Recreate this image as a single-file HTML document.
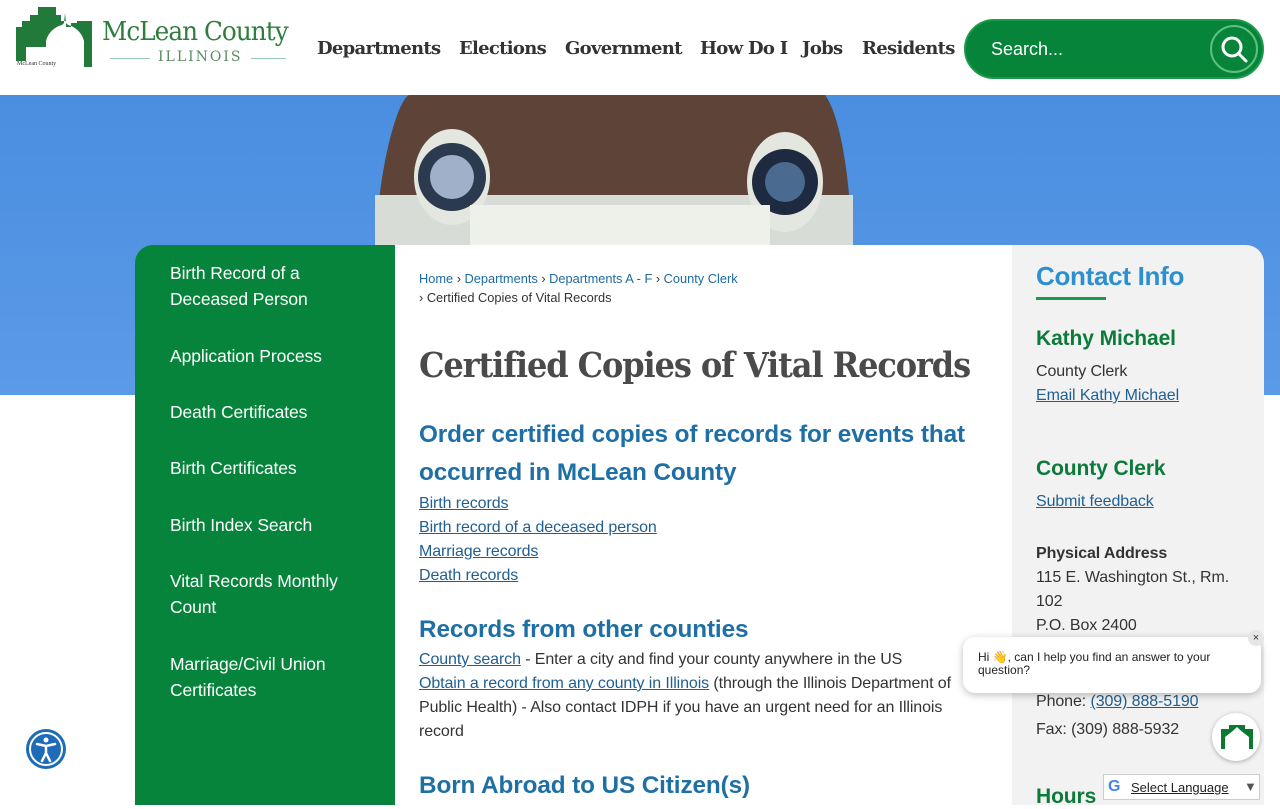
<!DOCTYPE html>
<html><head><meta charset="utf-8"><style>
*{margin:0;padding:0;box-sizing:border-box}
body{width:1280px;height:800px;overflow:hidden;position:relative;font-family:"Liberation Sans",sans-serif;background:#fff;color:#333}
.hdr{position:absolute;top:0;left:0;width:1280px;height:95px;background:#fff}
.nav{position:absolute;top:38px;font-family:"DejaVu Serif",serif;font-weight:bold;font-size:18px;color:#333;letter-spacing:-0.7px}
.search{position:absolute;left:964px;top:19px;width:300px;height:60px;border-radius:30px;background:#06843a;border:2px solid #1a9a4a}
.search span{position:absolute;left:25px;top:18px;color:#fff;font-size:18px}
.sbtn{position:absolute;right:4px;top:4px;width:48px;height:48px;border-radius:50%;border:2px solid #5cc07f}
.hero{position:absolute;top:95px;left:0;width:1280px;height:300px;background:linear-gradient(180deg,#4a8ee0,#5b9ae6)}
.side{position:absolute;left:135px;top:245px;width:260px;height:560px;background:#07843b;border-top-left-radius:18px}
.side div{position:absolute;left:35px;color:#fff;font-size:17.5px;line-height:26px;letter-spacing:-0.1px}
.main{position:absolute;left:395px;top:245px;width:617px;height:560px;background:#fff}
.right{position:absolute;left:1012px;top:245px;width:252px;height:560px;background:#f2f2f2;border-top-right-radius:18px}
a{color:#1f5f91;text-decoration:underline}
.bc{position:absolute;left:24px;font-size:12.8px;color:#333}
.bc a{text-decoration:none;color:#1f6aa0}
h1{position:absolute;left:24px;top:100px;font-family:"DejaVu Serif",serif;font-weight:bold;font-size:35px;color:#4a4a4a;letter-spacing:-1.2px;white-space:nowrap;transform:scaleX(0.915);transform-origin:0 0}
h2{position:absolute;left:24px;font-size:24.3px;color:#1d6fa5;font-weight:bold;line-height:38px;letter-spacing:-0.1px}
.p{position:absolute;left:24px;font-size:16px;line-height:24px;color:#333;width:560px;letter-spacing:-0.1px}
.r{position:absolute;left:24px;font-size:16px;line-height:24px;color:#333;letter-spacing:-0.1px}
.g{color:#0b7a3a;font-weight:bold;font-size:21px}
</style></head><body>
<div class="hdr">
<svg style="position:absolute;left:16px;top:7px" width="76" height="60" viewBox="0 0 76 60"><path d="M0 20h6v-6h8v-6h8V0h18v8h5v6h5v6h5v-4h6v-2h15v46h-8V34c-2-8-8-14-16-16l-2-2-1-10-1 10-2 2c-8 2-14 8-16 16v6H10v14H0z" fill="#217a3a"/><text x="1" y="58" font-size="6" font-family="Liberation Serif" fill="#333">McLean County</text></svg>
<div style="position:absolute;left:102px;top:17px;font-family:'DejaVu Serif',serif;font-size:26px;color:#2e7d3e;letter-spacing:-1px;transform:scaleX(0.95);transform-origin:0 0">McLean County</div>
<div style="position:absolute;left:110px;top:58px;width:176px;height:1px;background:#9cb"></div>
<div style="position:absolute;left:150px;top:49px;background:#fff;padding:0 8px;font-family:'DejaVu Serif',serif;font-size:14px;color:#5a8a66;letter-spacing:2px">ILLINOIS</div>
<div class="nav" style="left:317px">Departments</div>
<div class="nav" style="left:459px">Elections</div>
<div class="nav" style="left:565px">Government</div>
<div class="nav" style="left:700px">How Do I</div>
<div class="nav" style="left:802px">Jobs</div>
<div class="nav" style="left:862px">Residents</div>
<div class="search"><span>Search...</span><div class="sbtn"><svg width="44" height="44" viewBox="0 0 44 44"><circle cx="20" cy="20" r="9" stroke="#fff" stroke-width="3" fill="none"/><path d="M27 27l7 7" stroke="#fff" stroke-width="3" stroke-linecap="round"/></svg></div></div>
</div>
<div class="hero">
<svg width="1280" height="300"><path d="M375 150 C380 60 400 0 410 0 L825 0 C840 20 850 80 852 150 Z" fill="#5e4438"/><rect x="375" y="100" width="478" height="200" fill="#d8dcd6"/><ellipse cx="452" cy="82" rx="38" ry="48" fill="#e4e6e0"/><circle cx="452" cy="82" r="34" fill="#2c3a50"/><circle cx="452" cy="82" r="22" fill="#9fb0c8"/><ellipse cx="785" cy="87" rx="38" ry="50" fill="#e4e6e0"/><circle cx="785" cy="87" r="33" fill="#1e2a40"/><circle cx="785" cy="87" r="20" fill="#4a6a90"/><rect x="470" y="110" width="300" height="40" fill="#eef0ea"/><rect x="470" y="150" width="330" height="30" fill="#b8bcb4"/></svg>
</div>
<div class="side">
<div style="top:15px">Birth Record of a<br>Deceased Person</div>
<div style="top:98px">Application Process</div>
<div style="top:154px">Death Certificates</div>
<div style="top:210px">Birth Certificates</div>
<div style="top:267px">Birth Index Search</div>
<div style="top:323px">Vital Records Monthly<br>Count</div>
<div style="top:406px">Marriage/Civil Union<br>Certificates</div>
</div>
<div class="main">
<div class="bc" style="top:26px"><a>Home</a> › <a>Departments</a> › <a>Departments A - F</a> › <a>County Clerk</a></div>
<div class="bc" style="top:45px">› Certified Copies of Vital Records</div>
<h1>Certified Copies of Vital Records</h1>
<h2 style="top:171px">Order certified copies of records for events that<br>occurred in McLean County</h2>
<div class="p" style="top:247px"><a>Birth records</a><br><a>Birth record of a deceased person</a><br><a>Marriage records</a><br><a>Death records</a></div>
<h2 style="top:366px">Records from other counties</h2>
<div class="p" style="top:403px"><a>County search</a> - Enter a city and find your county anywhere in the US<br><a>Obtain a record from any county in Illinois</a> (through the Illinois Department of Public Health) - Also contact IDPH if you have an urgent need for an Illinois record</div>
<h2 style="top:522px">Born Abroad to US Citizen(s)</h2>
</div>
<div class="right">
<div style="position:absolute;left:24px;top:16px;font-size:26px;color:#2b8fd0;font-weight:bold;letter-spacing:-0.3px">Contact Info</div>
<div style="position:absolute;left:24px;top:52px;width:70px;height:3px;background:#1a9a4a"></div>
<div class="r g" style="top:82px">Kathy Michael</div>
<div class="r" style="top:115px">County Clerk<br><a>Email Kathy Michael</a></div>
<div class="r g" style="top:212px">County Clerk</div>
<div class="r" style="top:245px"><a>Submit feedback</a></div>
<div class="r" style="top:297px"><b>Physical Address</b><br>115 E. Washington St., Rm.<br>102<br>P.O. Box 2400</div>
<div class="r" style="top:445px">Phone: <a>(309) 888-5190</a></div>
<div class="r" style="top:473px">Fax: (309) 888-5932</div>
<div class="r g" style="top:540px">Hours</div>
</div>
<div style="position:absolute;left:963px;top:637px;width:298px;height:56px;background:#fff;border-radius:12px;box-shadow:0 2px 8px rgba(0,0,0,.25)"><div style="position:absolute;left:15px;top:14px;font-size:12px;line-height:13px;color:#222">Hi 👋, can I help you find an answer to your<br>question?</div></div>
<div style="position:absolute;left:1248px;top:630px;width:16px;height:16px;border-radius:50%;background:#e6e6e6;font-size:11px;text-align:center;line-height:16px">×</div>
<div style="position:absolute;left:1212px;top:713px;width:48px;height:48px;border-radius:50%;background:#fff;box-shadow:0 1px 4px rgba(0,0,0,.3)"><svg style="position:absolute;left:9px;top:12px" width="32" height="24"><path d="M0 4h8V0h16v4h8v20h-4V12c-4-3-8-6-12-10-4 4-8 7-12 10v12H0z" fill="#0a7a30"/></svg></div>
<div style="position:absolute;left:1103px;top:774px;width:157px;height:26px;background:#fff;border:1px solid #ccc;font-size:13px;color:#222"><span style="position:absolute;left:4px;top:3px;font-weight:bold;color:#4285f4;font-size:16px">G</span><span style="position:absolute;left:27px;top:5px;text-decoration:underline">Select Language</span><span style="position:absolute;left:140px;top:4px;color:#555">▼</span></div>
<div style="position:absolute;left:26px;top:729px;width:40px;height:40px;border-radius:50%;background:#1e6bb8"><svg width="40" height="40"><circle cx="20" cy="20" r="16" fill="none" stroke="#fff" stroke-width="2"/><circle cx="20" cy="11" r="2.5" fill="#fff"/><path d="M11 15l9 2 9-2M20 17v7l-4 8M20 24l4 8" stroke="#fff" stroke-width="2.5" fill="none" stroke-linecap="round"/></svg></div>
</body></html>
